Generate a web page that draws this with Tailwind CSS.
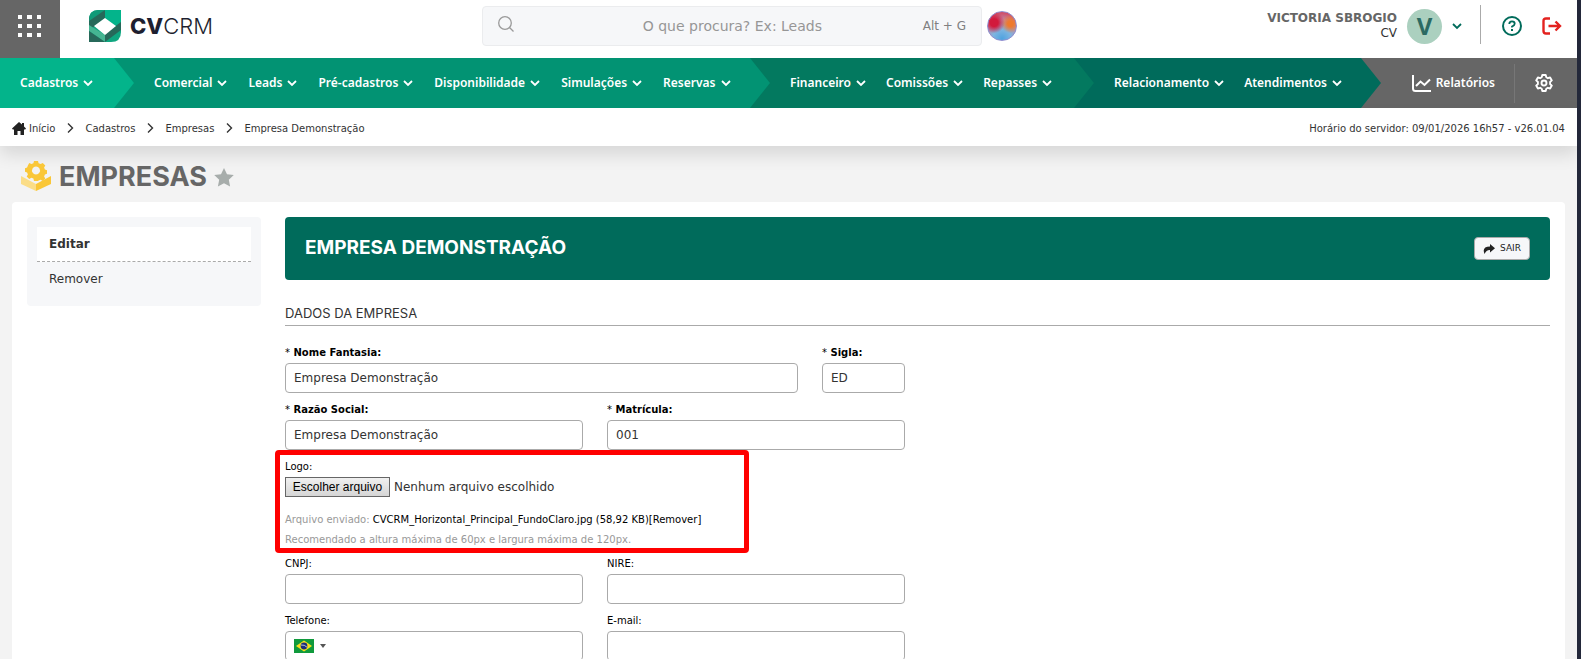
<!DOCTYPE html>
<html lang="pt-BR">
<head>
    <meta charset="UTF-8">
    <meta name="viewport" content="width=device-width, initial-scale=1.0">
    <title>CVCRM - Empresas</title>
    <script src="https://cdn.jsdelivr.net/npm/@tailwindcss/browser@4"></script>
</head>
<body class="min-h-screen bg-[#f3f3f3] border-r-4 border-[#23283a] font-['DejaVu_Sans',Verdana,sans-serif] text-[12px] text-[#333]">
    <svg class="hidden">
        <symbol id="chevron" viewBox="0 0 10 10"><path d="M1 3l4 4 4-4" fill="none" stroke="currentColor" stroke-width="1.8"/></symbol>
        <symbol id="sep" viewBox="0 0 8 12"><path d="M2 1.5L6.500 6 2 10.500" fill="none" stroke="currentColor" stroke-width="1.400"/></symbol>
    </svg>

    <!-- Header -->
    <header class="flex h-[58px] items-center bg-white">
        <button aria-label="Aplicativos" class="flex h-full w-15 shrink-0 items-start justify-center bg-[#666] pt-[15px]">
            <svg width="24" height="24" viewBox="0 0 24 24" fill="#fff"><path d="M0 0h4v4H0zM9 0h5v4H9zM19 0h4v4h-4zM0 9h4v4H0zM9 9h5v4H9zM19 9h4v4h-4zM0 18h4v4H0zM9 18h5v4H9zM19 18h4v4h-4z"/></svg>
        </button>
        <a href="#" class="flex w-[422px] shrink-0 items-center gap-2 pl-7 pb-1.5">
            <svg width="34" height="34" viewBox="0 0 34 34">
                <path d="M10 1h23v22q0 10-10 10H1V11Q1 1 10 1z" fill="#0fa680"/>
                <path d="M1 12q0-7 5-9l11-2v8L7 17l-6 4z" fill="#27695a"/>
                <path d="M17 1h16v12l-5 4-11-8z" fill="#03b48b"/>
                <path d="M1 12Q1 1 10 1h7L1 12z" fill="#109a78"/>
                <path d="M33 13v8L17 33v-8z" fill="#27695a"/>
                <path d="M1 16l16 10v7L1 22z" fill="#45b592"/>
                <path d="M1 22l16 11H1z" fill="#27695a"/>
                <path d="M6 17L17 9l11 8-11 9z" fill="#fff"/>
            </svg>
            <span class="font-[Inter,sans-serif] text-[22px] leading-7 text-[#1e1f30]"><b class="font-extrabold">CV</b><span class="font-light">CRM</span></span>
        </a>
        <div class="flex items-center gap-[5px] pb-1.5">
            <div class="flex h-10 w-[500px] items-center rounded border border-[#ebecee] bg-[#f6f7f9] px-[15px]">
                <svg class="mb-1" width="16" height="16" viewBox="0 0 16 16" fill="none" stroke="#9a9a9a" stroke-width="1.300"><circle cx="7" cy="7" r="6.300"/><path d="M11.500 11.500L15.500 15.500"/></svg>
                <input type="text" aria-label="Pesquisar" placeholder="O que procura? Ex: Leads" class="min-w-0 flex-1 pl-7 text-center text-[14px] outline-none placeholder:text-[#969696]">
                <span class="text-[12px] text-[#808080]">Alt + G</span>
            </div>
            <button aria-label="Assistente" class="size-[30px] rounded-full border border-[#8f8fd0] bg-[radial-gradient(circle_at_22%_38%,#d2193c_0,#d2193c_14%,transparent_38%),radial-gradient(circle_at_80%_42%,#ef7a2c_0,#ef7a2c_10%,transparent_34%),radial-gradient(circle_at_50%_95%,#4fa3e0_0,#7db4e0_30%,#c08aa8_62%,#d0506a_85%)]"></button>
        </div>
        <div class="flex flex-1 items-center justify-end pr-[15px] pb-1.5">
            <div class="pr-2.5 text-right leading-[15px]">
                <p class="text-[12px] font-bold text-[#666]">VICTORIA SBROGIO</p>
                <p class="text-[12px]">CV</p>
            </div>
            <button aria-label="Conta" class="flex items-center gap-2.5 text-[#006b5b]">
                <span class="flex size-[35px] items-center justify-center rounded-full bg-[#abd0bf] font-['Noto_Sans',sans-serif] text-[24px] font-bold text-[#2b6a62]">V</span>
                <svg width="10" height="10"><use href="#chevron"/></svg>
            </button>
            <span class="mb-1 ml-[18px] h-[39px] border-l border-[#aaa]"></span>
            <button aria-label="Ajuda" class="ml-5">
                <svg width="22" height="22" viewBox="0 0 22 22" fill="none" stroke="#006b5b" stroke-width="2"><circle cx="11" cy="11" r="9"/><path d="M8.300 9q0-2.600 2.700-2.600T13.700 8.800q0 1.500-2.700 2.800v1" stroke-width="1.800"/><path d="M11 14v2"/></svg>
            </button>
            <button aria-label="Sair do sistema" class="ml-[19px]">
                <svg width="20" height="18" viewBox="0 0 20 18" fill="none" stroke="#e3221f" stroke-width="2.400"><path d="M8 1.500H4Q1.500 1.500 1.500 4v10q0 2.500 2.500 2.500h4M6.500 9H18M13.500 4.500L18 9l-4.500 4.500"/></svg>
            </button>
        </div>
    </header>

    <!-- Main menu -->
    <nav class="flex h-[50px] bg-[#666] font-['Noto_Sans',sans-serif] text-[12px] font-semibold text-white">
        <div class="z-40 flex w-[134px] items-center bg-[#03b48b] pl-5 [clip-path:polygon(0_0,calc(100%-20px)_0,100%_50%,calc(100%-20px)_100%,0_100%)]">
            <a href="#" class="flex items-center gap-[5px]">Cadastros <svg width="10" height="10"><use href="#chevron"/></svg></a>
        </div>
        <div class="z-30 -ml-5 flex w-[656px] items-center gap-[21px] bg-[#029373] pl-10 [clip-path:polygon(0_0,calc(100%-20px)_0,100%_50%,calc(100%-20px)_100%,0_100%)]">
            <a href="#" class="flex items-center gap-[5px]">Comercial <svg width="10" height="10"><use href="#chevron"/></svg></a>
            <a href="#" class="flex items-center gap-[5px]">Leads <svg width="10" height="10"><use href="#chevron"/></svg></a>
            <a href="#" class="flex items-center gap-[5px]">Pré-cadastros <svg width="10" height="10"><use href="#chevron"/></svg></a>
            <a href="#" class="flex items-center gap-[5px]">Disponibilidade <svg width="10" height="10"><use href="#chevron"/></svg></a>
            <a href="#" class="flex items-center gap-[5px]">Simulações <svg width="10" height="10"><use href="#chevron"/></svg></a>
            <a href="#" class="flex items-center gap-[5px]">Reservas <svg width="10" height="10"><use href="#chevron"/></svg></a>
        </div>
        <div class="z-20 -ml-5 flex w-[344px] items-center gap-5 bg-[#03795f] pl-10 [clip-path:polygon(0_0,calc(100%-20px)_0,100%_50%,calc(100%-20px)_100%,0_100%)]">
            <a href="#" class="flex items-center gap-[5px]">Financeiro <svg width="10" height="10"><use href="#chevron"/></svg></a>
            <a href="#" class="flex items-center gap-[5px]">Comissões <svg width="10" height="10"><use href="#chevron"/></svg></a>
            <a href="#" class="flex items-center gap-[5px]">Repasses <svg width="10" height="10"><use href="#chevron"/></svg></a>
        </div>
        <div class="z-10 -ml-5 flex w-[307px] items-center gap-5 bg-[#006b5b] pl-10 [clip-path:polygon(0_0,calc(100%-20px)_0,100%_50%,calc(100%-20px)_100%,0_100%)]">
            <a href="#" class="flex items-center gap-[5px]">Relacionamento <svg width="10" height="10"><use href="#chevron"/></svg></a>
            <a href="#" class="flex items-center gap-[5px]">Atendimentos <svg width="10" height="10"><use href="#chevron"/></svg></a>
        </div>
        <div class="flex flex-1 items-center justify-end">
            <a href="#" class="flex items-center gap-[5px] pr-[19px]">
                <svg width="19" height="17" viewBox="0 0 19 17" fill="none" stroke="#fff" stroke-width="2"><path d="M1 0v13.500Q1 16 3.500 16H19M4 11l4.500-4.500 4 3.500L18 4.500"/></svg>
                Relatórios
            </a>
            <button aria-label="Configurações" class="flex h-[39px] items-center border-l border-[#777] pr-6 pl-5">
                <svg width="18" height="18" viewBox="0 0 18 18" fill="none" stroke="#fff" stroke-width="1.900" stroke-linejoin="round"><path d="M7.300 1h3.400l.6 2.300 1.500.9 2.300-.7L16.800 6.400 15.100 8v2l1.700 1.600-1.700 2.900-2.300-.7-1.500.9-.6 2.300H7.300l-.6-2.300-1.500-.9-2.300.7-1.700-2.900L2.900 10V8L1.200 6.400l1.700-2.900 2.300.7 1.500-.9z"/><circle cx="9" cy="9" r="2.500"/></svg>
            </button>
        </div>
    </nav>

    <!-- Breadcrumb -->
    <div class="flex h-[38px] items-center justify-between bg-white px-3 pt-0.5 text-[10px] shadow-[0_8px_18px_rgba(0,0,0,0.12)]">
        <nav aria-label="Navegação" class="flex items-center gap-[11px]">
            <a href="#" class="flex items-center gap-[3px]">
                <svg width="14" height="13" viewBox="0 0 14 13" fill="#222"><path d="M7 0l3 2.600V1h2v3.400L14 6.500 13.200 7.500H12V13H8.500V9h-3v4H2V7.500H.8L0 6.500z"/></svg>
                Início
            </a>
            <svg width="8" height="12"><use href="#sep"/></svg>
            <a href="#">Cadastros</a>
            <svg width="8" height="12"><use href="#sep"/></svg>
            <a href="#">Empresas</a>
            <svg width="8" height="12"><use href="#sep"/></svg>
            <a href="#">Empresa Demonstração</a>
        </nav>
        <p>Horário do servidor: 09/01/2026 16h57 - v26.01.04</p>
    </div>

    <div class="flex h-14 items-center gap-[7px] pl-[21px] pt-1.5">
        <svg class="mb-0.5" width="31" height="31" viewBox="0 0 31 31">
            <path d="M0 15l15 8v7L0 23z" fill="#fbdd87"/>
            <path d="M30 15l-15 8v7l15-7z" fill="#fac738"/>
            <path d="M13 0h4l.6 2.300 2 .8L21.800 2l2.500 2.600-1.200 2 .8 2 2.100.6v3.600l-2.100.6-.8 2 1.200 2-2.500 2.600-2.200-1.200-2 .8L17 20h-4l-.6-2.400-2-.8L8.200 18l-2.500-2.600 1.200-2-.8-2L4 10.800V7.200l2.100-.6.8-2L8.200 2l2.200 1.100 2-.8zM15 5.500a4 4 0 1 0 .01 0z" fill="#fac738"/>
        </svg>
        <h1 class="font-[Inter,sans-serif] text-[27px] font-bold text-[#666]">EMPRESAS</h1>
        <button aria-label="Favoritar">
            <svg width="20" height="19" viewBox="0 0 20 19" fill="#a7adab"><path d="M10 0l3 6.200 6.800.9-5 4.700 1.300 6.800L10 15.300l-6.100 3.300 1.300-6.800-5-4.700L7 6.200z"/></svg>
        </button>
    </div>

    <!-- Content -->
    <main class="mr-3 ml-3 flex items-start gap-6 rounded bg-white p-[15px]">
        <aside class="w-[234px] shrink-0 rounded bg-[#f6f7f9] px-2.5 pt-2.5 pb-2.5">
            <a href="#" class="flex h-[35px] items-center border-b border-dashed border-[#aaa] bg-white px-3 font-bold">Editar</a>
            <a href="#" class="flex h-[34px] items-center px-3">Remover</a>
        </aside>
        <section class="min-w-0 flex-1">
            <div class="flex h-[63px] items-center justify-between rounded bg-[#006b5b] px-5">
                <h2 class="font-[Inter,sans-serif] text-[19px] font-bold text-white">EMPRESA DEMONSTRAÇÃO</h2>
                <button class="flex h-[23px] items-center gap-[5px] rounded border border-[#aaa] bg-[#f6f7f9] px-2 text-[9px] text-[#222]">
                    <svg width="12" height="10" viewBox="0 0 12 10" fill="#222"><path d="M7 0l5 4.200L7 8.500V6Q3.500 5.700 1.500 10-1.500 2.500 7 2.400z"/></svg>
                    SAIR
                </button>
            </div>
            <h3 class="mt-[21px] h-[25px] border-b border-[#aaa] pt-0.5 font-[Inter,sans-serif] text-[13px] leading-5">DADOS DA EMPRESA</h3>

            <form class="mt-5 w-[620px] text-[10px] text-black">
                <div class="grid grid-cols-[1fr_83px] gap-6">
                    <div>
                        <label for="fantasia" class="block h-[17px] leading-[14px] font-bold"><span class="font-normal">*</span> Nome Fantasia:</label>
                        <input id="fantasia" type="text" value="Empresa Demonstração" class="block h-[30px] w-full rounded border border-[#aaa] px-2 text-[12px] text-[#333]">
                    </div>
                    <div>
                        <label for="sigla" class="block h-[17px] leading-[14px] font-bold"><span class="font-normal">*</span> Sigla:</label>
                        <input id="sigla" type="text" value="ED" class="block h-[30px] w-full rounded border border-[#aaa] px-2 text-[12px] text-[#333]">
                    </div>
                </div>
                <div class="mt-2.5 grid grid-cols-2 gap-6">
                    <div>
                        <label for="razao" class="block h-[17px] leading-[14px] font-bold"><span class="font-normal">*</span> Razão Social:</label>
                        <input id="razao" type="text" value="Empresa Demonstração" class="block h-[30px] w-full rounded border border-[#aaa] px-2 text-[12px] text-[#333]">
                    </div>
                    <div>
                        <label for="matricula" class="block h-[17px] leading-[14px] font-bold"><span class="font-normal">*</span> Matrícula:</label>
                        <input id="matricula" type="text" value="001" class="block h-[30px] w-full rounded border border-[#aaa] px-2 text-[12px] text-[#333]">
                    </div>
                </div>
                <div class="-ml-2.5 h-[103px] w-[474px] rounded-sm border-5 border-[#f00] pt-[5px] pl-[5px]">
                    <label for="logo" class="block h-[17px] leading-[14px]">Logo:</label>
                    <input id="logo" type="file" class="peer sr-only">
                    <div class="flex items-center gap-1 text-[12px] text-[#333]">
                        <label for="logo" class="flex h-5 w-[105px] items-center justify-center border border-[#666] bg-linear-to-b from-[#f0f0f0] to-[#d5d5d5] font-['Liberation_Sans',Arial,sans-serif] text-black">Escolher arquivo</label>
                        <span>Nenhum arquivo escolhido</span>
                    </div>
                    <p class="mt-[13px] leading-5 text-[#999]">Arquivo enviado: <a href="#" class="text-black">CVCRM_Horizontal_Principal_FundoClaro.jpg (58,92 KB)</a><a href="#" class="text-black">[Remover]</a></p>
                    <p class="leading-5 text-[#999]">Recomendado a altura máxima de 60px e largura máxima de 120px.</p>
                </div>
                <div class="mt-1 grid grid-cols-2 gap-6">
                    <div>
                        <label for="cnpj" class="block h-[17px] leading-[14px]">CNPJ:</label>
                        <input id="cnpj" type="text" class="block h-[30px] w-full rounded border border-[#aaa] px-2 text-[12px] text-[#333]">
                    </div>
                    <div>
                        <label for="nire" class="block h-[17px] leading-[14px]">NIRE:</label>
                        <input id="nire" type="text" class="block h-[30px] w-full rounded border border-[#aaa] px-2 text-[12px] text-[#333]">
                    </div>
                </div>
                <div class="mt-2.5 grid grid-cols-2 gap-6">
                    <div>
                        <label for="telefone" class="block h-[17px] leading-[14px]">Telefone:</label>
                        <div class="flex h-[30px] items-center rounded border border-[#aaa] pl-2">
                            <button type="button" aria-label="Brasil" class="flex items-center gap-1.5">
                                <svg width="20" height="14" viewBox="0 0 20 14"><path d="M0 0h20v14H0z" fill="#109a3c"/><path d="M10 1.500L18 7l-8 5.500L2 7z" fill="#fce01c"/><circle cx="10" cy="7" r="3.400" fill="#1c2d78"/><path d="M7 6q3.500-.5 6 2.200" stroke="#dfe8f0" stroke-width=".8" fill="none"/></svg>
                                <svg width="6" height="4" viewBox="0 0 6 4" fill="#555"><path d="M0 0h6L3 4z"/></svg>
                            </button>
                            <input id="telefone" type="text" class="min-w-0 flex-1 px-2 text-[12px] text-[#333] outline-none">
                        </div>
                    </div>
                    <div>
                        <label for="email" class="block h-[17px] leading-[14px]">E-mail:</label>
                        <input id="email" type="text" class="block h-[30px] w-full rounded border border-[#aaa] px-2 text-[12px] text-[#333]">
                    </div>
                </div>
            </form>
        </section>
    </main>
</body>
</html>
